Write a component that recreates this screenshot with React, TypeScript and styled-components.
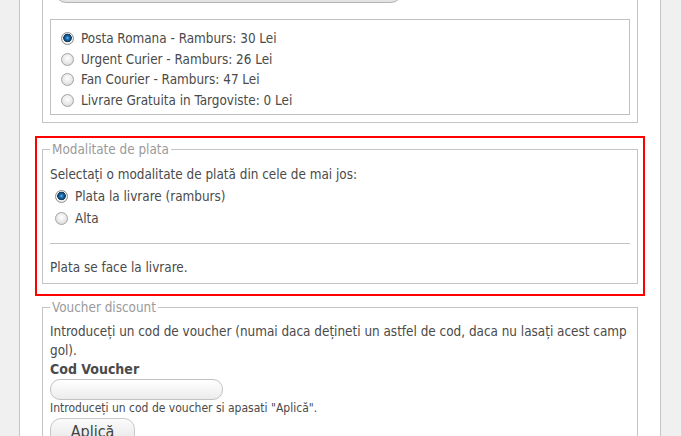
import { memo } from 'react';
import styled, { createGlobalStyle } from 'styled-components';

const GlobalStyle = createGlobalStyle`
    html, body {
        margin: 0;
        padding: 0;
        background: #f0f0f0;
        overflow: hidden;
    }
    body {
        font-family: "DejaVu Sans Condensed", "DejaVu Sans", sans-serif;
        font-size: 13.4px;
        color: #4a4a4a;
    }
`;

const StyledPanel = styled.div`
    margin: -37px 0 0 19px;
    width: 596px;
    height: 520px;
    padding: 10px 22px 0;
    background: #fff;
    border-left: 1px solid #c6c6c6;
    border-right: 1px solid #c6c6c6;
`;

const StyledFieldset = styled.fieldset<{ $top?: number; $bottom?: number }>`
    margin: ${(p) => p.$top ?? 0}px 0 0;
    padding: 7px 7px ${(p) => p.$bottom ?? 7}px;
    border: 1px solid #c4c4c4;
    min-width: 0;
`;

const StyledLegend = styled.legend`
    padding: 0 2px;
    line-height: 15px;
    color: #9a9a9a;
`;

const StyledSelectEdge = styled.div`
    margin-left: 5px;
    width: 345px;
    height: 20px;
    border: 1px solid #b4b4b4;
    border-radius: 11px;
    background: linear-gradient(#f7f7f7, #e2e2e2);
`;

const StyledOptionsBox = styled.div`
    margin-top: 16px;
    padding: 8px 10px 3px;
    border: 1px solid #c0c0c0;
`;

const StyledRadioRow = styled.label<{ $height: number; $indent: number }>`
    display: flex;
    align-items: center;
    gap: 7px;
    height: ${(p) => p.$height}px;
    padding-left: ${(p) => p.$indent}px;
`;

const StyledRadio = styled.input.attrs({ type: 'radio' })`
    appearance: none;
    margin: 0;
    width: 13px;
    height: 13px;
    flex: none;
    border: 1px solid #a3a3a3;
    border-radius: 50%;
    box-sizing: border-box;
    background: radial-gradient(circle at 50% 40%, #ffffff 0, #ececec 45%, #d2d2d2 100%);

    &:checked {
        border-color: #8e8e8e;
        background: radial-gradient(circle at 50% 45%, #6cc0f0 0, #1f76b8 1.5px, #0c3f6d 3.5px, #1d3f5c 4px, #f4f4f4 4.6px, #dcdcdc 100%);
    }
`;

const StyledRedFrame = styled.div`
    margin: 13px -7px 0;
    padding: 4px 5px 10px;
    border: 2px solid #ff0000;
`;

const StyledText = styled.p<{ $lh?: number }>`
    margin: 0;
    line-height: ${(p) => p.$lh ?? 20}px;
`;

const StyledRule = styled.div`
    margin: 13px 0 14px;
    border-top: 1px solid #c2c2c2;
`;

const StyledLabel = styled.div`
    font-weight: bold;
    font-size: 14px;
    line-height: 19px;
`;

const StyledInput = styled.input`
    display: block;
    width: 173px;
    height: 21px;
    box-sizing: border-box;
    border: 1px solid #c2c2c2;
    border-radius: 10px;
    background: linear-gradient(#ffffff, #ececec);
    outline: none;
`;

const StyledHint = styled.div`
    font-size: 12px;
    line-height: 16px;
`;

const StyledButton = styled.button`
    margin-top: 2px;
    width: 85px;
    height: 28px;
    border: 1px solid #c8c8c8;
    border-radius: 11px;
    background: linear-gradient(#fbfbfb, #e4e4e4);
    font-family: inherit;
    font-size: 16px;
    color: #444;
`;

const shipping = [
    'Posta Romana - Ramburs: 30 Lei',
    'Urgent Curier - Ramburs: 26 Lei',
    'Fan Courier - Ramburs: 47 Lei',
    'Livrare Gratuita in Targoviste: 0 Lei',
];

const payment = ['Plata la livrare (ramburs)', 'Alta'];

function App() {
    return (
        <>
            <GlobalStyle />
            <StyledPanel>
                <StyledFieldset>
                    <StyledSelectEdge />
                    <StyledOptionsBox>
                        {shipping.map((label, i) => (
                            <StyledRadioRow key={label} $height={20.7} $indent={0}>
                                <StyledRadio name="livrare" defaultChecked={i === 0} />
                                {label}
                            </StyledRadioRow>
                        ))}
                    </StyledOptionsBox>
                </StyledFieldset>

                <StyledRedFrame>
                    <StyledFieldset $bottom={5}>
                        <StyledLegend>Modalitate de plata</StyledLegend>
                        <StyledText $lh={22}>Selectați o modalitate de plată din cele de mai jos:</StyledText>
                        {payment.map((label, i) => (
                            <StyledRadioRow key={label} $height={22} $indent={5}>
                                <StyledRadio name="plata" defaultChecked={i === 0} />
                                {label}
                            </StyledRadioRow>
                        ))}
                        <StyledRule />
                        <StyledText>Plata se face la livrare.</StyledText>
                    </StyledFieldset>
                </StyledRedFrame>

                <StyledFieldset $top={4}>
                    <StyledLegend>Voucher discount</StyledLegend>
                    <StyledText $lh={19}>
                        Introduceți un cod de voucher (numai daca dețineti un astfel de cod, daca nu lasați acest camp gol).
                    </StyledText>
                    <StyledLabel>Cod Voucher</StyledLabel>
                    <StyledInput />
                    <StyledHint>Introduceți un cod de voucher si apasati "Aplică".</StyledHint>
                    <StyledButton>Aplică</StyledButton>
                </StyledFieldset>
            </StyledPanel>
        </>
    );
}

export default memo(App);
